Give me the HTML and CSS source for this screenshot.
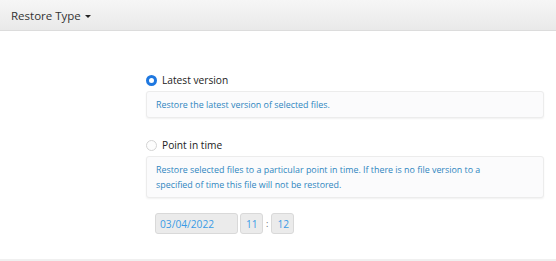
FILE: index.html
```html
<!DOCTYPE html>
<html>
<head>
<meta charset="utf-8">
<link rel="stylesheet" href="styles.css">
</head>
<body>
<div class="page">
  <div class="header">
    <span class="title">Restore Type</span><span class="caret"></span>
  </div>
  <div class="content">
    <div class="option">
      <label class="radio-row"><span class="radio checked"></span><span class="label">Latest version</span></label>
      <div class="desc">Restore the latest version of selected files.</div>
    </div>
    <div class="option">
      <label class="radio-row"><span class="radio"></span><span class="label">Point in time</span></label>
      <div class="desc">Restore selected files to a particular point in time. If there is no file version to a<br>specified of time this file will not be restored.</div>
    </div>
    <div class="time-row">
      <span class="field date">03/04/2022</span>
      <span class="field num">11</span>
      <span class="colon">:</span>
      <span class="field num">12</span>
    </div>
  </div>
  <div class="footer-line"></div>
</div>
</body>
</html>
```
FILE: styles.css
```css
html, body {
  margin: 0;
  padding: 0;
  background: #ffffff;
}
body {
  font-family: "Open Sans", "DejaVu Sans", sans-serif;
  width: 556px;
  height: 261px;
  overflow: hidden;
}
.page {
  display: flex;
  flex-direction: column;
  height: 261px;
}
.header {
  height: 31px;
  box-sizing: border-box;
  background: linear-gradient(#f6f6f6, #e9e9e9);
  border-bottom: 1px solid #dcdcdc;
  display: flex;
  align-items: center;
  padding-left: 11px;
  color: #333;
  font-size: 11.5px;
}
.caret {
  width: 0;
  height: 0;
  border-left: 3px solid transparent;
  border-right: 3px solid transparent;
  border-top: 3px solid #222;
  margin-left: 4px;
  margin-top: 2px;
}
.content {
  flex: 1;
  padding: 42px 12px 0 146px;
}
.option {
  display: flex;
  flex-direction: column;
}
.option + .option {
  margin-top: 20px;
}
.radio-row {
  display: flex;
  align-items: center;
  height: 14px;
}
.radio {
  width: 11px;
  height: 11px;
  box-sizing: border-box;
  border-radius: 50%;
  border: 1px solid #d4d4d4;
  background: #fdfdfd;
  margin-right: 5px;
}
.radio.checked {
  border: 3px solid #1f78e0;
  background: #fff;
}
.label {
  font-size: 10.2px;
  color: #222;
}
.desc {
  margin-top: 4px;
  background: #fbfbfc;
  border: 1px solid #ececec;
  border-radius: 3px;
  box-shadow: 0 1px 2px rgba(0,0,0,0.06);
  padding: 5px 9px;
  font-size: 8.9px;
  line-height: 15px;
  color: #2f86c0;
}
.time-row {
  margin-top: 15px;
  padding-left: 9px;
  display: flex;
  align-items: center;
}
.field {
  height: 21px;
  box-sizing: border-box;
  background: #ebebeb;
  border: 1px solid #d9d9d9;
  border-radius: 3px;
  font-size: 10.2px;
  color: #3a9be6;
  display: flex;
  align-items: center;
  padding: 0 4px;
}
.field.date {
  width: 83px;
}
.field.num {
  width: 23px;
  padding: 0 5px;
}
.field + .field {
  margin-left: 2px;
}
.colon {
  font-size: 9px;
  color: #666;
  margin: 0 3px;
}
.footer-line {
  height: 2px;
  background: #f0f0f0;
}
```
